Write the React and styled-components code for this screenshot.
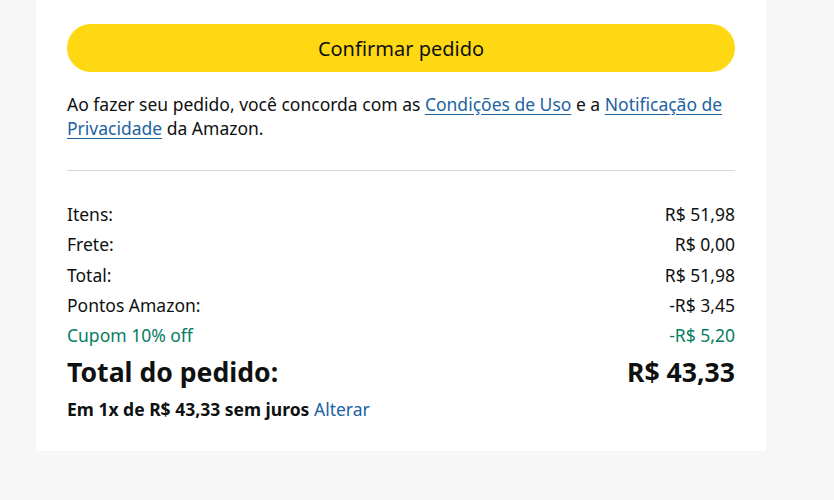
import React from 'react'
import styled, { createGlobalStyle } from 'styled-components'

const GlobalStyle = createGlobalStyle`
  html, body {
    margin: 0;
    padding: 0;
    background: #f7f7f7;
  }
  body {
    font-family: "Noto Sans", "Open Sans", Arial, sans-serif;
    color: #0f1111;
  }
`

const Page = styled.div`
  width: 834px;
  height: 500px;
  background: #f7f7f7;
`

const Card = styled.section`
  margin-left: 36px;
  width: 730px;
  height: 451px;
  box-sizing: border-box;
  background: #ffffff;
  padding: 24px 31px 0;
`

const ConfirmButton = styled.button`
  display: flex;
  align-items: center;
  justify-content: center;
  width: 100%;
  height: 48px;
  border: none;
  border-radius: 24px;
  background: #ffd814;
  color: #0f1111;
  font-family: inherit;
  font-size: 20px;
  cursor: pointer;
`

const Terms = styled.p`
  margin: 20px 0 0;
  font-size: 17.5px;
  line-height: 24px;
`

const Link = styled.a`
  color: #2162a1;
  text-decoration: underline;
  text-underline-offset: 3px;
  cursor: pointer;
`

const Divider = styled.hr`
  margin: 30px 0 0;
  border: none;
  border-top: 1px solid #d5d9d9;
`

const Summary = styled.div`
  display: flex;
  flex-direction: column;
  padding-top: 28px;
`

const Row = styled.div`
  display: flex;
  justify-content: space-between;
  height: 30.3px;
  line-height: 30px;
  font-size: 17.5px;
  color: ${({ $tone }) => ($tone === 'green' ? '#067d62' : '#0f1111')};
`

const GrandTotal = styled.div`
  display: flex;
  justify-content: space-between;
  margin-top: 5px;
  font-size: 26.6px;
  font-weight: 700;
  line-height: 34px;
  color: #0f1111;
`

const Installments = styled.div`
  margin-top: 9px;
  font-size: 17.5px;
  font-weight: 700;
  line-height: 22px;
`

const Change = styled.a`
  font-weight: 400;
  color: #2162a1;
  cursor: pointer;
`

const lines = [
  { label: 'Itens:', value: 'R$ 51,98' },
  { label: 'Frete:', value: 'R$ 0,00' },
  { label: 'Total:', value: 'R$ 51,98' },
  { label: 'Pontos Amazon:', value: '-R$ 3,45' },
  { label: 'Cupom 10% off', value: '-R$ 5,20', tone: 'green' }
]

export default function App() {
  return (
    <Page>
      <GlobalStyle />
      <Card>
        <ConfirmButton>Confirmar pedido</ConfirmButton>
        <Terms>
          Ao fazer seu pedido, você concorda com as <Link>Condições de Uso</Link> e a{' '}
          <Link>Notificação de Privacidade</Link> da Amazon.
        </Terms>
        <Divider />
        <Summary>
          {lines.map(line => (
            <Row key={line.label} $tone={line.tone}>
              <span>{line.label}</span>
              <span>{line.value}</span>
            </Row>
          ))}
          <GrandTotal>
            <span>Total do pedido:</span>
            <span>R$ 43,33</span>
          </GrandTotal>
          <Installments>
            Em 1x de R$ 43,33 sem juros <Change>Alterar</Change>
          </Installments>
        </Summary>
      </Card>
    </Page>
  )
}
